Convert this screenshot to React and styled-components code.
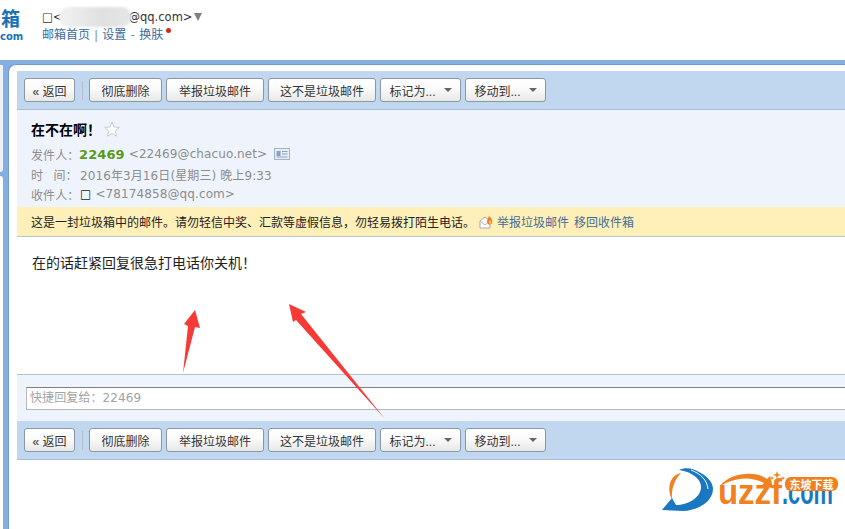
import React from "react";
import styled, { createGlobalStyle } from "styled-components";

const CJK = `"Liberation Sans", "Noto Sans CJK SC", sans-serif`;
const LATIN = `"DejaVu Sans", "Noto Sans CJK SC", sans-serif`;

const GlobalStyle = createGlobalStyle`
  html, body {
    margin: 0;
    padding: 0;
    background: #fff;
    overflow: hidden;
  }
  body {
    font-family: ${CJK};
    font-size: 12px;
  }
`;

function ToolbarButtons() {
  return (
    <>
      <Button $w={51}>« 返回</Button>
      <Sep />
      <Button $w={73}>彻底删除</Button>
      <Button $w={98}>举报垃圾邮件</Button>
      <Button $w={108}>这不是垃圾邮件</Button>
      <Button $w={81}>
        标记为...<Caret />
      </Button>
      <Button $w={81}>
        移动到...<Caret />
      </Button>
    </>
  );
}

function App() {
  return (
    <Page>
      <GlobalStyle />
      <Header>
        <Brand>
          <BrandName>箱</BrandName>
          <BrandSub>com</BrandSub>
        </Brand>
        <Account>
          <AccountRow>
            <span>□&lt;</span>
            <Blur />
            <span>@qq.com&gt;</span>
            <AccountCaret />
          </AccountRow>
          <LinkRow>
            邮箱首页<Divider>|</Divider>设置<Divider>-</Divider>换肤
            <RedDot />
          </LinkRow>
        </Account>
      </Header>

      <Shell>
        <Rail>
          <RailTab />
          <RailRest />
        </Rail>
        <Main>
          <Toolbar>
            <ToolbarButtons />
          </Toolbar>

          <MailHead>
            <Subject>
              在不在啊！
              <svg width="16" height="16" viewBox="0 0 16 16">
                <path
                  d="M8 1l2 5 5.400.4-4.100 3.500 1.300 5.300L8 12.300 3.400 15.200l1.300-5.300L.6 6.400 6 6z"
                  fill="#fff"
                  stroke="#c8ccd0"
                />
              </svg>
            </Subject>
            <MetaRow>
              <Label>发件人：</Label>
              <Sender>22469</Sender>
              <span>&lt;22469@chacuo.net&gt;</span>
              <CardIcon width="16" height="12" viewBox="0 0 16 12">
                <rect x=".5" y=".5" width="15" height="11" fill="#e8eef8" stroke="#9db3cf" />
                <rect x="2.500" y="3" width="4" height="5" fill="#8aa0bd" />
                <path d="M8 3.500h5.500M8 6h5.500M2.500 9h11" stroke="#8aa0bd" />
              </CardIcon>
            </MetaRow>
            <MetaRow>
              <Label>时&nbsp;&nbsp;&nbsp;间：</Label>
              <span>2016年3月16日(星期三) 晚上9:33</span>
            </MetaRow>
            <MetaRow>
              <Label>收件人：</Label>
              <Dark>□</Dark>
              <span>&lt;78174858@qq.com&gt;</span>
            </MetaRow>
          </MailHead>

          <Notice>
            <span>这是一封垃圾箱中的邮件。请勿轻信中奖、汇款等虚假信息，勿轻易拨打陌生电话。</span>
            <svg width="14" height="14" viewBox="0 0 14 14">
              <path d="M1 6l5-4 5 4v7H1z" fill="#fdfdfd" stroke="#a9a9a9" />
              <path d="M1 6l5 4 5-4" fill="none" stroke="#b9b9b9" />
              <path d="M9 9C7 6 9 4 10 1c2 2 4 4 3 7-.5 1.500-3 2-4 1z" fill="#f0762a" />
              <path d="M10 8.500C9.500 7 10.500 6 11 5c1 1 1.500 2 1 3-.4.7-1.500 1-2 .5z" fill="#fcd23f" />
            </svg>
            <NoticeLink>举报垃圾邮件</NoticeLink>
            <NoticeLink>移回收件箱</NoticeLink>
          </Notice>

          <Body>在的话赶紧回复很急打电话你关机！</Body>

          <Reply>
            <ReplyInput>快捷回复给：22469</ReplyInput>
          </Reply>

          <Toolbar>
            <ToolbarButtons />
          </Toolbar>
        </Main>
      </Shell>

      <Arrows width="845" height="529" viewBox="0 0 845 529">
        <path d="M195 310l5 18-5-1-12 46 5-47-4-2z" fill="#f63a36" />
        <path d="M289 304l17 8-5 2 84 105-89-99-3 2z" fill="#f63a36" />
      </Arrows>

      <Logo width="190" height="60" viewBox="0 0 190 60">
        <path
          d="M7 48l10-12 4 7c12 0 24-7 25-17 1-8-8-16-22-18 6-3 14-2 20 2 8 4 14 10 14 17 0 11-12 21-30 22z"
          fill="#1a78c2"
        />
        <path d="M36 8c10 4 16 10 17 19" fill="none" stroke="#fff" strokeWidth="1" />
        <path d="M26 11C16 13 11 24 17 38c-1-10 2-20 9-27z" fill="#f08020" />
        <path d="M65 24c10-13 35-16 47-7l3-3 3 12-12-2 3-3C96 14 80 15 65 24z" fill="#f08020" />
        <path
          d="M122 9l1 3 3 1-3 1-1 3-1-3-3-1 3-1zM128 14l.6 1.500 1.500.6-1.500.6-.6 1.500-.6-1.500-1.500-.6 1.500-.6zM117 14l.6 1.500 1.500.6-1.500.6-.6 1.500-.6-1.500-1.500-.6 1.500-.6z"
          fill="#f08020"
        />
        <g transform="translate(0 42) scale(1 1.350)">
          <WordMark x="63" y="0" $c="#f08020" textLength="64" lengthAdjust="spacingAndGlyphs">
            uzzf
          </WordMark>
          <WordMark x="127" y="0" $c="#1a78c2" textLength="51" lengthAdjust="spacingAndGlyphs">
            .com
          </WordMark>
        </g>
        <rect x="130" y="15" width="53" height="14" rx="6" fill="#f08020" />
        <BadgeText x="156.500" y="26.500" textAnchor="middle">东坡下载</BadgeText>
      </Logo>
    </Page>
  );
}

export default App;

const Page = styled.div`
  position: relative;
  width: 845px;
  height: 529px;
  overflow: hidden;
  background: #fff;
`;

const Header = styled.header`
  display: flex;
  height: 60px;
  background: #fff;
`;

const Brand = styled.div`
  width: 42px;
  flex: none;
  padding-top: 9px;
  box-sizing: border-box;
  overflow: hidden;
  color: #1873b4;
  font-weight: 700;
`;

const BrandName = styled.div`
  padding-left: 1px;
  font-size: 19px;
  line-height: 22px;
`;

const BrandSub = styled.div`
  font-family: ${LATIN};
  font-size: 10px;
  line-height: 11px;
`;

const Account = styled.div`
  padding-top: 7px;
`;

const AccountRow = styled.div`
  display: flex;
  align-items: center;
  height: 19px;
  font-family: ${LATIN};
  font-size: 11.500px;
  color: #333;
`;

const Blur = styled.div`
  width: 72px;
  height: 20px;
  margin: 0 -2px 0 -4px;
  border-radius: 9px;
  background: linear-gradient(90deg, #f2f2f2, #e0e0e0 60%, #e6e6e6);
  filter: blur(1px);
`;

const AccountCaret = styled.i`
  width: 0;
  height: 0;
  margin-left: 2px;
  border: 4px solid transparent;
  border-top: 8px solid #808080;
  border-bottom: 0;
`;

const LinkRow = styled.div`
  position: relative;
  height: 17px;
  line-height: 18px;
  color: #3b6aa0;
`;

const Divider = styled.span`
  margin: 0 4.500px;
  color: #6f8caf;
`;

const RedDot = styled.i`
  position: absolute;
  left: 124px;
  top: 2px;
  width: 5px;
  height: 5px;
  border-radius: 50%;
  background: #d42a1c;
`;

const Shell = styled.div`
  display: flex;
  height: 469px;
  padding-top: 5px;
  box-sizing: border-box;
  background: #85aee2;
`;

const Rail = styled.div`
  display: flex;
  flex: none;
  flex-direction: column;
  gap: 4px;
  width: 3px;
  margin-right: 5px;
`;

const RailTab = styled.div`
  height: 107px;
  background: #eef2f7;
  border-radius: 0 0 3px 0;
`;

const RailRest = styled.div`
  flex: 1;
  background: #fff;
  border-radius: 0 3px 0 0;
`;

const Main = styled.main`
  flex: 1;
  min-width: 0;
  margin-top: -1px;
  padding: 6px 0 0 8px;
  background: #fff;
  border-top: 1px solid #6f9ad2;
  border-left: 1px solid #6f9ad2;
  border-top-left-radius: 8px;
`;

const Toolbar = styled.div`
  display: flex;
  gap: 4px;
  height: 31px;
  padding: 7px 0 0 7px;
  background: #c1d7f0;
  border-bottom: 1px solid #a8bdd4;
`;

const Button = styled.div`
  display: flex;
  align-items: center;
  justify-content: center;
  width: ${(p) => p.$w}px;
  height: 24px;
  box-sizing: border-box;
  border: 1px solid #8b97a5;
  border-radius: 3px;
  background: linear-gradient(#fff, #fafafa 45%, #e8e8e8);
  color: #333;
  font-size: 12px;
`;

const Caret = styled.i`
  width: 0;
  height: 0;
  margin-left: 8px;
  border: 4px solid transparent;
  border-top: 4px solid #666;
  border-bottom: 0;
`;

const Sep = styled.i`
  width: 1px;
  height: 19px;
  margin: 3px 2px 0 3px;
  background: #b5c0cc;
`;

const MailHead = styled.div`
  height: 97px;
  padding: 9px 0 0 14px;
  box-sizing: border-box;
  background: #eff4fc;
`;

const Subject = styled.div`
  display: flex;
  align-items: center;
  gap: 3px;
  height: 20px;
  margin-bottom: 5px;
  color: #000;
  font-size: 14px;
  font-weight: 700;
`;

const MetaRow = styled.div`
  display: flex;
  align-items: center;
  gap: 4px;
  height: 20px;
  color: #8c8c8c;
  font-family: ${LATIN};
  font-size: 12px;
  letter-spacing: 0.1px;
`;

const Label = styled.span`
  margin-right: -4px;
  width: 49px;
  font-family: ${CJK};
`;

const Sender = styled.b`
  color: #5b9a17;
  font-size: 13px;
  margin-left: -1px;
`;

const Dark = styled.span`
  color: #222;
`;

const CardIcon = styled.svg`
  margin-left: 3px;
`;

const Notice = styled.div`
  display: flex;
  align-items: center;
  height: 29px;
  padding-left: 14px;
  background: #fff0b9;
  border-bottom: 1px solid #b9c3cc;
  color: #222;

  svg {
    margin: 0 4px 0 4px;
  }
`;

const NoticeLink = styled.span`
  margin-right: 5px;
  color: #3f6c97;
`;

const Body = styled.div`
  height: 137px;
  padding: 17px 0 0 15px;
  box-sizing: border-box;
  color: #222;
  font-size: 14px;
  line-height: 18px;
`;

const Reply = styled.div`
  height: 47px;
  padding: 12px 0 0 9px;
  box-sizing: border-box;
  background: #eff4fc;
  border-top: 1px solid #afc1d3;
`;

const ReplyInput = styled.div`
  height: 23px;
  margin-right: -2px;
  padding-left: 3px;
  box-sizing: border-box;
  background: #fff;
  border: 1px solid #b8b8b8;
  border-top-color: #7f7f7f;
  color: #a3a3a3;
  font-family: ${LATIN};
  font-size: 12px;
  letter-spacing: 0.1px;
  line-height: 21px;
`;

const Arrows = styled.svg`
  position: absolute;
  left: 0;
  top: 0;
  pointer-events: none;
`;

const Logo = styled.svg`
  position: absolute;
  left: 655px;
  top: 462px;
`;

const WordMark = styled.text`
  fill: ${(p) => p.$c};
  font-family: "Liberation Sans", sans-serif;
  font-size: 26px;
  font-weight: 700;
`;

const BadgeText = styled.text`
  fill: #fff;
  font-family: "Noto Sans CJK SC", sans-serif;
  font-size: 11px;
  font-weight: 700;
`;
